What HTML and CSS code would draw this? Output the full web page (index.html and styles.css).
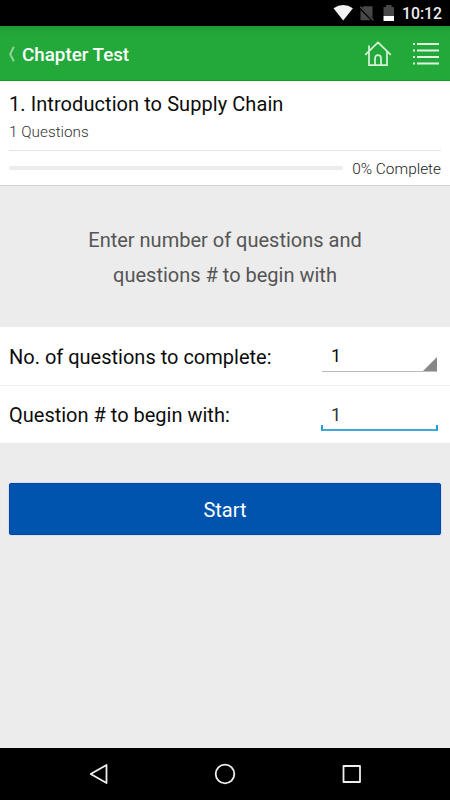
FILE: index.html
```html
<!DOCTYPE html>
<html lang="en">
<head>
<meta charset="utf-8">
<title>Chapter Test</title>
<link rel="stylesheet" href="styles.css">
</head>
<body>
<div class="screen">
  <div class="status">
    <svg class="status-icons" width="64" height="26" viewBox="0 0 64 26">
      <path d="M1.500 8.300Q11.200 1.600 20.900 8.300L11.200 20.500Z" fill="#f2f2f2"/>
      <path d="M31.500 6.200H40.500V20.200H28.500V9.200Z" fill="#484848"/>
      <path d="M28 7.500L41.500 21" stroke="#000" stroke-width="3"/>
      <path d="M28.300 6.800L41.300 20.300" stroke="#555" stroke-width="1.300"/>
      <path d="M54 5H59.500V7H62V16H51.500V7H54Z" fill="#484848"/>
      <path d="M51.500 16H62V21H51.500Z" fill="#fff"/>
    </svg>
    <span class="clock">10:12</span>
  </div>
  <header class="bar">
    <svg class="back" width="8" height="18" viewBox="0 0 8 18"><path d="M5.800 1.800L2.200 9L5.800 16.200" fill="none" stroke="#91d39c" stroke-width="2"/></svg>
    <h1 class="title">Chapter Test</h1>
    <svg class="home" width="28" height="28" viewBox="0 0 28 28" fill="none" stroke="#d9f1dc" stroke-width="1.700" stroke-linecap="round" stroke-linejoin="round">
      <path d="M1.700 14.300L14 2.300L26.300 14.300M5 11.500V6M5 11.500V25.200H23V11.500M11 25V18.500Q11 15.200 14 15.200T17 18.500V25"/>
    </svg>
    <svg class="list" width="28" height="26" viewBox="0 0 28 26" stroke="#e1f3e3" stroke-width="2">
      <path d="M1 3H3M5 3H27M1 9.500H3M5 9.500H27M1 16H3M5 16H27M1 22.500H3M5 22.500H27"/>
    </svg>
  </header>
  <section class="summary">
    <h2 class="chapter">1. Introduction to Supply Chain</h2>
    <div class="count">1 Questions</div>
    <div class="progress"><div class="track"></div><span class="percent">0% Complete</span></div>
  </section>
  <p class="prompt">Enter number of questions and<br>questions # to begin with</p>
  <div class="form">
    <div class="row">
      <span class="label">No. of questions to complete:</span>
      <div class="field select">1<svg class="corner" width="14" height="14" viewBox="0 0 14 14"><path d="M14 0V14H0Z" fill="#888"/></svg></div>
    </div>
    <div class="row">
      <span class="label">Question # to begin with:</span>
      <div class="field input">1</div>
    </div>
  </div>
  <button class="start">Start</button>
  <nav class="nav">
    <svg width="24" height="24" viewBox="0 0 24 24"><path d="M4.700 12L20.500 3V21Z"/></svg>
    <svg width="24" height="24" viewBox="0 0 24 24"><circle cx="12" cy="12" r="9.300"/></svg>
    <svg width="24" height="24" viewBox="0 0 24 24"><path d="M3.500 4H20V20H3.500Z"/></svg>
  </nav>
</div>
</body>
</html>
```
FILE: styles.css
```css
* { box-sizing: border-box; }
body { margin: 0; font-family: Roboto, sans-serif; color: #0c0c0c; }
.screen { width: 450px; height: 800px; background: #ececec; display: flex; flex-direction: column; overflow: hidden; }
.status { height: 26px; flex: none; background: #000; display: flex; justify-content: flex-end; padding-right: 10px; }
.status-icons { margin-right: 6px; }
.clock { color: #eee; font-size: 15.8px; font-weight: 500; line-height: 28px; width: 38px; white-space: nowrap; }
.bar { height: 55px; flex: none; display: flex; align-items: center; background: linear-gradient(#1e9a34, #22a638 6px, #22a93a 14px); border-bottom: 1px solid #0c9f20; padding: 2px 10px 0 8px; }
.title { margin: 0 auto 0 6px; color: #fff; font-size: 18.8px; font-weight: 500; line-height: 24px; padding-top: 2px; }
.home { margin-right: 20px; }
.summary { height: 104px; flex: none; background: #fff; padding: 10px 9px 0; box-shadow: 0 1px #d4d4d4; }
.chapter { margin: 0; font-size: 20px; font-weight: 400; line-height: 26px; letter-spacing: .07px; white-space: nowrap; }
.count { height: 34px; border-bottom: 1px solid #e4e4e4; font-size: 15.3px; font-weight: 300; line-height: 30px; color: #333; }
.progress { display: flex; align-items: center; gap: 9px; height: 34px; }
.track { flex: 1; height: 4px; border-radius: 2px; background: #ececec; }
.percent { font-size: 15.4px; font-weight: 300; color: #222; padding-top: 1px; white-space: nowrap; }
.prompt { margin: 0; height: 142px; flex: none; padding-top: 38px; text-align: center; font-size: 20px; line-height: 35px; color: #555; }
.form { background: #fff; flex: none; height: 116px; }
.row { height: 58px; display: flex; padding-left: 9px; padding-right: 12px; justify-content: space-between; }
.row + .row { border-top: 1px solid #eee; }
.label { font-size: 20px; line-height: 60px; white-space: nowrap; }
.row + .row .label { line-height: 58px; }
.field { position: relative; width: 117px; height: 45px; padding: 17px 0 0 10px; font-size: 18px; line-height: 24px; }
.select { border-bottom: 1px solid #bbb; width: 115px; padding-left: 9px; margin-right: 1px; }
.corner { position: absolute; right: 0; bottom: 0; }
.input { color: #333; border-bottom: 2px solid #42a8d8; }
.input::before { content: ""; position: absolute; left: 0; right: 0; bottom: -1px; height: 5px; border: solid #209fd6; border-width: 0 2px; }
.start { flex: none; height: 52px; margin: 40px 9px 0; border: 1px solid #0045ae; border-radius: 2px; background: #0054ae; color: #fff; font: 400 20px/52px Roboto, sans-serif; padding: 0; box-shadow: 0 0 2px #b4c7e2; }
.nav { height: 52px; flex: none; margin-top: auto; background: #000; display: flex; justify-content: space-between; align-items: center; padding: 0 86px; }
.nav svg { fill: none; stroke: #eee; stroke-width: 1.8; stroke-linejoin: round; }
```
